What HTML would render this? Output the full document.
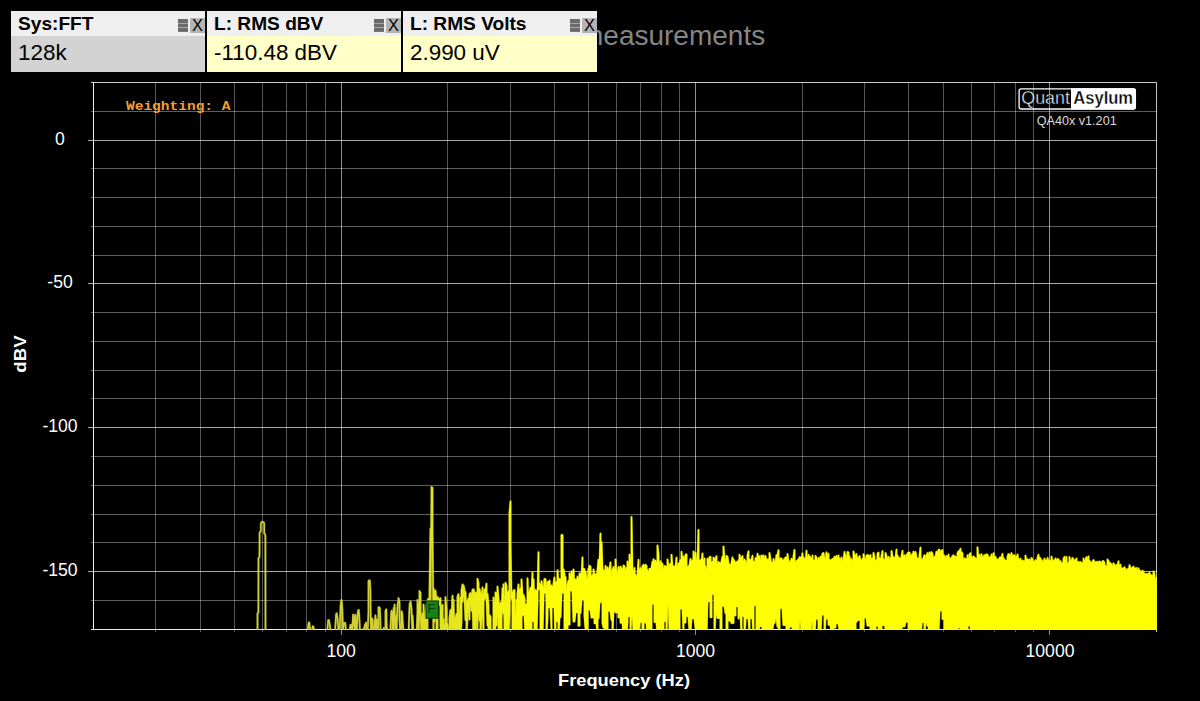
<!DOCTYPE html>
<html><head><meta charset="utf-8"><title>QA40x</title>
<style>
html,body{margin:0;padding:0;background:#000;}
body{width:1200px;height:701px;position:relative;overflow:hidden;font-family:"Liberation Sans",sans-serif;}
svg{position:absolute;left:0;top:0;}
.bgtxt{position:absolute;left:580px;top:19.5px;font-size:28px;line-height:32px;color:#858585;white-space:nowrap;}
.panel{position:absolute;top:11px;height:61px;overflow:hidden;}
.panel .hd{position:absolute;left:0;top:0;right:0;height:24.6px;background:#efefef;}
.panel .bd{position:absolute;left:0;top:24.6px;right:0;bottom:0;}
.panel .t{position:absolute;left:7.1px;top:2.5px;font-size:17.8px;line-height:20px;font-weight:bold;color:#000;white-space:nowrap;transform:scaleX(1.075);transform-origin:left center;}
.panel .v{position:absolute;left:6.5px;top:4.0px;font-size:22.6px;line-height:26px;color:#000;white-space:nowrap;transform:scaleX(0.992);transform-origin:left center;}
.panel .mn{position:absolute;right:17.1px;top:8.3px;width:10px;height:3.4px;background:#6a6a6a;box-shadow:0 4.45px 0 #6a6a6a,0 8.9px 0 #6a6a6a;}
.panel .x{position:absolute;right:0px;top:7px;width:15px;height:14.5px;background:#b4b4b4;color:#000;font-size:16.4px;line-height:15.5px;text-align:center;}
.lbl{position:absolute;color:#fff;font-size:17.6px;line-height:20px;white-space:nowrap;}
.yl{width:60px;text-align:center;left:30px;}
.xl{width:80px;text-align:center;top:641px;}
</style></head><body>
<div class="bgtxt">measurements</div>
<div class="panel" style="left:11px;width:194px;"><div class="hd"></div><div class="bd" style="background:#d3d3d3"></div>
 <div class="t">Sys:FFT</div><div class="mn"></div><div class="x">X</div><div class="bd"><div class="v">128k</div></div></div>
<div class="panel" style="left:207px;width:194px;"><div class="hd"></div><div class="bd" style="background:#ffffc8"></div>
 <div class="t">L: RMS dBV</div><div class="mn"></div><div class="x">X</div><div class="bd"><div class="v">-110.48 dBV</div></div></div>
<div class="panel" style="left:403px;width:194px;"><div class="hd"></div><div class="bd" style="background:#ffffc8"></div>
 <div class="t">L: RMS Volts</div><div class="mn"></div><div class="x">X</div><div class="bd"><div class="v">2.990 uV</div></div></div>

<svg width="1200" height="701" viewBox="0 0 1200 701">
<defs><clipPath id="pc"><rect x="93.0" y="82.5" width="1064.0" height="547.5"/></clipPath></defs>
<g shape-rendering="crispEdges" stroke-width="1">
<line x1="91.0" y1="82.5" x2="1157.0" y2="82.5" stroke="#fff" stroke-opacity="0.80"/>
<line x1="91.0" y1="111.5" x2="1157.0" y2="111.5" stroke="#fff" stroke-opacity="0.37"/>
<line x1="88.0" y1="140.5" x2="1157.0" y2="140.5" stroke="#fff" stroke-opacity="0.66"/>
<line x1="91.0" y1="168.5" x2="1157.0" y2="168.5" stroke="#fff" stroke-opacity="0.37"/>
<line x1="91.0" y1="197.5" x2="1157.0" y2="197.5" stroke="#fff" stroke-opacity="0.37"/>
<line x1="91.0" y1="226.5" x2="1157.0" y2="226.5" stroke="#fff" stroke-opacity="0.37"/>
<line x1="91.0" y1="255.5" x2="1157.0" y2="255.5" stroke="#fff" stroke-opacity="0.37"/>
<line x1="88.0" y1="283.5" x2="1157.0" y2="283.5" stroke="#fff" stroke-opacity="0.66"/>
<line x1="91.0" y1="312.5" x2="1157.0" y2="312.5" stroke="#fff" stroke-opacity="0.37"/>
<line x1="91.0" y1="341.5" x2="1157.0" y2="341.5" stroke="#fff" stroke-opacity="0.37"/>
<line x1="91.0" y1="370.5" x2="1157.0" y2="370.5" stroke="#fff" stroke-opacity="0.37"/>
<line x1="91.0" y1="398.5" x2="1157.0" y2="398.5" stroke="#fff" stroke-opacity="0.37"/>
<line x1="88.0" y1="427.5" x2="1157.0" y2="427.5" stroke="#fff" stroke-opacity="0.66"/>
<line x1="91.0" y1="456.5" x2="1157.0" y2="456.5" stroke="#fff" stroke-opacity="0.37"/>
<line x1="91.0" y1="485.5" x2="1157.0" y2="485.5" stroke="#fff" stroke-opacity="0.37"/>
<line x1="91.0" y1="514.5" x2="1157.0" y2="514.5" stroke="#fff" stroke-opacity="0.37"/>
<line x1="91.0" y1="542.5" x2="1157.0" y2="542.5" stroke="#fff" stroke-opacity="0.37"/>
<line x1="88.0" y1="571.5" x2="1157.0" y2="571.5" stroke="#fff" stroke-opacity="0.66"/>
<line x1="91.0" y1="600.5" x2="1157.0" y2="600.5" stroke="#fff" stroke-opacity="0.37"/>
<line x1="155.5" y1="82.5" x2="155.5" y2="632.0" stroke="#fff" stroke-opacity="0.34"/>
<line x1="200.5" y1="82.5" x2="200.5" y2="632.0" stroke="#fff" stroke-opacity="0.34"/>
<line x1="234.5" y1="82.5" x2="234.5" y2="632.0" stroke="#fff" stroke-opacity="0.34"/>
<line x1="262.5" y1="82.5" x2="262.5" y2="632.0" stroke="#fff" stroke-opacity="0.34"/>
<line x1="286.5" y1="82.5" x2="286.5" y2="632.0" stroke="#fff" stroke-opacity="0.34"/>
<line x1="306.5" y1="82.5" x2="306.5" y2="632.0" stroke="#fff" stroke-opacity="0.34"/>
<line x1="325.5" y1="82.5" x2="325.5" y2="632.0" stroke="#fff" stroke-opacity="0.34"/>
<line x1="341.5" y1="82.5" x2="341.5" y2="634.5" stroke="#fff" stroke-opacity="0.56"/>
<line x1="447.5" y1="82.5" x2="447.5" y2="632.0" stroke="#fff" stroke-opacity="0.34"/>
<line x1="510.5" y1="82.5" x2="510.5" y2="632.0" stroke="#fff" stroke-opacity="0.34"/>
<line x1="554.5" y1="82.5" x2="554.5" y2="632.0" stroke="#fff" stroke-opacity="0.34"/>
<line x1="588.5" y1="82.5" x2="588.5" y2="632.0" stroke="#fff" stroke-opacity="0.34"/>
<line x1="616.5" y1="82.5" x2="616.5" y2="632.0" stroke="#fff" stroke-opacity="0.34"/>
<line x1="640.5" y1="82.5" x2="640.5" y2="632.0" stroke="#fff" stroke-opacity="0.34"/>
<line x1="661.5" y1="82.5" x2="661.5" y2="632.0" stroke="#fff" stroke-opacity="0.34"/>
<line x1="679.5" y1="82.5" x2="679.5" y2="632.0" stroke="#fff" stroke-opacity="0.34"/>
<line x1="695.5" y1="82.5" x2="695.5" y2="634.5" stroke="#fff" stroke-opacity="0.56"/>
<line x1="802.5" y1="82.5" x2="802.5" y2="632.0" stroke="#fff" stroke-opacity="0.34"/>
<line x1="864.5" y1="82.5" x2="864.5" y2="632.0" stroke="#fff" stroke-opacity="0.34"/>
<line x1="908.5" y1="82.5" x2="908.5" y2="632.0" stroke="#fff" stroke-opacity="0.34"/>
<line x1="943.5" y1="82.5" x2="943.5" y2="632.0" stroke="#fff" stroke-opacity="0.34"/>
<line x1="971.5" y1="82.5" x2="971.5" y2="632.0" stroke="#fff" stroke-opacity="0.34"/>
<line x1="994.5" y1="82.5" x2="994.5" y2="632.0" stroke="#fff" stroke-opacity="0.34"/>
<line x1="1015.5" y1="82.5" x2="1015.5" y2="632.0" stroke="#fff" stroke-opacity="0.34"/>
<line x1="1033.5" y1="82.5" x2="1033.5" y2="632.0" stroke="#fff" stroke-opacity="0.34"/>
<line x1="1049.5" y1="82.5" x2="1049.5" y2="634.5" stroke="#fff" stroke-opacity="0.56"/>
<line x1="1156.5" y1="82.5" x2="1156.5" y2="632.0" stroke="#fff" stroke-opacity="0.76"/>
<line x1="93.5" y1="82.0" x2="93.5" y2="630.0" stroke="#fff" stroke-opacity="0.93"/>
<line x1="91.0" y1="629.5" x2="1157.0" y2="629.5" stroke="#fff" stroke-opacity="0.93"/>
</g>
<defs><path id="tr" d="M45.6,635.5 49.4,635.5 53.1,635.5 56.7,635.5 60.2,635.5 63.7,635.5 67.1,635.5 70.4,635.5 73.6,635.5 76.8,635.5 79.9,635.5 83,635.5 86,635.5 88.9,635.5 91.8,635.5 94.6,635.5 97.4,635.5 100.1,635.5 102.8,635.5 105.4,635.5 108,635.5 110.5,635.5 113,635.5 115.5,635.5 117.9,635.5 120.3,635.5 122.6,635.5 125,635.5 127.2,635.5 129.5,635.5 131.7,635.5 133.9,635.5 136,635.5 138.2,635.5 140.3,635.5 142.3,635.5 144.4,635.5 146.4,635.5 148.4,635.5 150.3,635.5 152.3,635.5 154.2,635.5 156.1,635.5 157.9,635.5 159.8,635.5 161.6,635.5 163.4,635.5 165.2,635.5 166.9,635.5 168.7,635.5 170.4,635.5 172.1,635.5 173.8,635.5 175.4,635.5 177.1,635.5 178.7,635.5 180.3,635.5 181.9,635.5 183.5,635.5 185.1,635.5 186.6,635.5 188.1,635.5 189.6,635.5 191.2,635.5 192.6,635.5 194.1,635.5 195.6,635.5 197,635.5 198.4,635.5 199.9,635.5 201.3,635.5 202.7,635.5 204,635.5 205.4,635.5 206.8,635.5 208.1,635.5 209.4,635.5 210.8,635.5 212.1,635.5 213.4,635.5 214.7,635.5 215.9,635.5 217.2,635.5 218.5,635.5 219.7,635.5 220.9,635.5 222.2,635.5 223.4,635.5 224.6,635.5 225.8,635.5 227,635.5 228.2,635.5 229.3,635.5 230.5,635.5 231.6,635.5 232.8,635.5 233.9,635.5 235.1,635.5 236.2,635.5 237.3,635.5 238.4,635.5 239.5,635.5 240.6,635.5 241.7,635.5 242.7,635.5 243.8,635.5 244.8,634.8 245.9,635.5 246.9,635.5 248,635.5 249,635.5 250,635.5 251,635.5 252.1,635.5 253.1,635.5 254.1,635.5 257.5,635.5 257.5,613.5 258.4,612.5 258.5,558 259.5,557 259.6,532.5 260.8,531.5 260.9,523.5 261.6,522 263.6,522 264.2,523.5 264.3,533.5 265.2,534.5 265.4,536 265.5,635.5 268.3,635.5 269.2,635.5 270.1,635.5 271,635.5 271.9,635.5 272.7,635.5 273.6,635.5 274.5,635.5 275.4,635.5 276.2,635.5 277.1,635.5 277.9,635.5 278.8,635.5 279.6,635.5 280.5,635.5 281.3,635.5 282.1,635.5 282.9,635.5 283.8,635.5 284.6,635.5 285.4,635.5 286.2,635.5 287,633.2 287.8,631 288.6,635.5 289.4,635.5 290.2,635.5 291,635.5 291.7,635.5 292.5,635.5 293.3,635.5 294.1,635.5 294.8,633.8 295.6,630.3 296.3,634.5 297.1,635.5 297.8,635.5 298.6,635.5 299.3,635.5 300.1,635.5 300.8,635.5 301.5,635.5 302.3,635.5 303,635.5 303.7,635.5 304.4,635.5 305.1,635.5 305.8,635.5 306.6,635.5 307.3,635.5 308,628 308.7,622.7 309.3,622.5 310,629.5 310.7,635.5 311.4,635.5 312.1,629.9 312.8,626.2 313.5,626.9 314.1,631.5 314.8,635.5 315.5,635.5 316.1,635.5 316.8,635.5 317.5,635.5 318.1,635.5 318.8,635.5 319.4,635.5 320.1,635.5 320.7,635.5 321.3,635.5 322,635.5 322.6,635.5 323.3,635.5 323.9,635.5 324.5,635.5 325.1,633.4 325.8,635.5 326.4,635.5 327,635.5 327.6,627.1 328.2,620.1 328.9,620.1 329.5,623.2 330.1,626.9 330.7,635.5 331.3,635.5 331.9,635.5 332.5,635.5 333.1,635.5 333.7,635.5 334.3,635.5 334.8,635.5 335.4,626.3 336,615 336.6,613.2 337.2,616.1 337.8,621 338.3,627.3 338.9,635.5 339.5,635.5 340,621 340.6,606.1 341.2,600.1 341.7,600.3 342.3,608.3 342.9,629 343.4,627.2 344,623.3 344.5,623.5 345.1,622.7 345.6,626.2 346.2,635.2 346.7,635.5 347.3,635.5 347.8,635.5 348.3,635.5 348.9,635.5 349.4,635.5 349.9,628.4 350.5,624.8 351,624.8 351.5,633.4 352.1,635.5 352.6,622.8 353.1,614.6 353.6,617.4 354.1,625.2 354.7,628.2 355.2,614.7 355.7,616.4 356.2,635.5 356.7,635.5 357.2,621.8 357.7,613.6 358.2,610.3 358.7,609.9 359.2,615.1 359.7,625.5 360.2,635.5 360.7,635.5 361.2,635.5 361.7,635.5 362.2,635.5 362.7,635.5 363.2,635.5 363.7,628.3 364.2,633.3 364.7,626 365.1,624.2 365.6,624.9 366.1,622.6 366.6,635.5 367.1,635.5 367.5,635.5 368.5,612.1 368.5,581.2 369.4,580.2 369.9,580.8 370.4,591.2 370.8,623.2 371.3,635.5 371.8,622.9 372.2,618.5 372.7,634.2 373.1,635.5 373.6,635.5 374.5,619.9 374.5,634.4 375.4,615.3 375.9,621.5 376.3,628.1 376.8,619.4 377.2,630.9 377.6,635.5 378.5,624.4 378.5,607.3 379.4,607.2 379.9,608.6 380.3,617.9 380.7,635.5 381.2,635.5 381.6,635.5 382.5,635.5 382.5,636.5 383.3,635.5 383.8,627.8 384.2,633.3 384.6,635.5 385.5,632.5 385.5,610.9 386.3,609.3 386.7,626.6 387.5,635.5 387.5,636.5 388.4,635.5 388.8,635.5 389.2,635.5 389.6,635.5 390.5,635.5 390.5,626.4 391.3,612.2 391.7,610.7 392.5,613.9 392.5,635.5 393.3,630.5 393.7,607.9 394.5,622.5 394.5,604.6 395.3,635.5 395.7,635.5 396.5,615.3 396.5,635.5 397.3,610 397.6,604.7 398.5,600.4 398.5,598.1 399.5,602.2 399.5,618.8 400.4,635.5 400.7,635.5 401.5,626.8 401.5,611.2 402.3,613.5 402.6,620.8 403.5,631.3 403.5,635.5 404.5,636.5 404.5,635.5 405.3,635.5 405.6,635.5 406.5,635.5 406.5,636.5 407.5,636.5 407.5,635.5 408.5,635.5 408.5,636.5 409.3,612.4 409.7,603.5 410.5,603.6 410.5,601.5 411.5,608.7 411.5,610.1 412.5,635.5 412.5,615.6 413.5,633.5 413.5,635.5 414.5,636.5 414.5,635.5 415.3,635.5 415.7,635.5 416.5,635.5 416.5,636.5 417.5,612.4 417.5,600 418.5,610 418.5,635.5 419.5,606.1 419.5,591 420.5,593 420.5,611.2 421.5,636.5 421.5,635.5 422.5,613.4 422.5,635.5 423.5,624.5 423.5,604.6 424.5,635.1 424.5,636.1 425.5,635.5 425.5,611.8 426.5,604.4 426.5,635.5 427.5,635.5 427.5,600.1 428.5,598.8 428.5,603.1 429.5,597.7 429.5,593.5 430.5,528.2 430.5,604.2 431.5,498.1 431.5,487 432.5,487.8 432.5,528 433.5,635.5 433.5,588.3 434.5,592.5 434.5,621.5 435.5,592.3 435.5,590.6 436.5,601.7 436.5,632.9 437.5,635.5 437.5,596.9 438.5,599.3 438.5,605.7 439.5,604 439.5,598.9 440.5,598.2 440.5,625.3 441.5,635.5 441.5,608.8 442.5,604.8 442.5,635.4 443.5,635.5 443.5,619 444.5,635.5 444.5,636.5 445.5,624.5 445.5,597.1 446.5,610.3 446.5,635.5 447.5,635.5 447.5,624.3 448.5,635.5 448.5,636.5 449.5,635.5 449.5,617.8 450.5,610.1 450.5,635.5 451.5,632.7 451.5,616.8 452.5,595.7 452.5,618.6 453.5,635.5 453.5,599.8 454.5,635.5 454.5,636.5 455.5,635.5 455.5,618.7 456.5,614 456.5,635.5 457.5,635.5 457.5,596.8 458.5,594.1 458.5,625.3 459.5,636.5 459.5,635.5 460.5,597.4 460.5,635.5 461.5,621.8 461.5,590.3 462.5,584.4 462.5,601.8 463.5,591 463.5,585.3 464.5,589.8 464.5,595.5 465.5,620.2 465.5,591.9 466.5,618.3 466.5,635.5 467.5,618.9 467.5,601.7 468.5,598.2 468.5,602 469.5,619.5 469.5,594.2 470.5,593.1 470.5,597.1 471.5,610.7 471.5,603.2 472.5,589.7 472.5,602.9 473.5,635.5 473.5,589.2 474.5,592.2 474.5,635.5 475.5,628.9 475.5,593.6 476.5,592.8 476.5,602.3 477.5,635.5 477.5,578.8 478.5,583.2 478.5,606.9 479.5,620.8 479.5,589 480.5,594 480.5,635.5 481.5,615.6 481.5,600.1 482.5,587.5 482.5,600.1 483.5,635.5 483.5,598.9 484.5,589.5 484.5,599.2 485.5,596.8 485.5,590.8 486.5,583.7 486.5,596.2 487.5,625.5 487.5,594 488.5,605.6 488.5,635.5 489.5,635.5 489.5,615 490.5,616.8 490.5,635.5 491.5,635.5 491.5,630.6 492.5,635.5 492.5,636.5 493.5,635.5 493.5,597.5 494.5,606.7 494.5,635.5 495.5,625.2 495.5,592.5 496.5,593.1 496.5,625.5 497.5,601.5 497.5,586.6 498.5,598.7 498.5,635.5 499.5,623.8 499.5,606.7 500.5,602.6 500.5,635.5 501.5,635.5 501.5,619.2 502.5,588.3 502.5,604.1 503.5,613.4 503.5,584.3 504.5,622.5 504.5,635.5 505.5,635.5 505.5,582.7 506.5,586 506.5,635.5 507.5,626.4 507.5,593.1 508.5,591.3 508.5,635.5 509.5,610.9 509.5,512.5 510.5,501.4 510.5,542.5 511.5,599 511.5,591.8 512.5,592.7 512.5,635.5 513.5,635.5 513.5,590.7 514.5,590 514.5,635.5 515.5,636.5 515.5,635.5 516.5,599.8 516.5,635.5 517.5,628.9 517.5,594.2 518.5,584.4 518.5,635.5 519.5,635.5 519.5,591.5 520.5,588.5 520.5,635.5 521.5,635.5 521.5,579.4 522.5,595.4 522.5,615.1 523.5,615.1 523.5,595 524.5,599.1 524.5,615.1 525.5,635.5 525.5,607.9 526.5,604 526.5,630.7 527.5,630.7 527.5,578.3 528.5,608.9 528.5,635.5 529.5,635.5 529.5,592.6 530.5,587.8 530.5,635.5 531.5,634.3 531.5,594.1 532.5,572.8 532.5,621 533.5,621 533.5,579.2 534.5,607.6 534.5,635.5 535.5,635.5 535.5,590 536.5,591.5 536.5,635 537.5,601.2 537.5,596.4 538.5,552.2 538.5,589.2 539.5,589.2 539.5,583.5 540.5,586.3 540.5,635.5 541.5,635.5 541.5,581.2 542.5,589.2 542.5,635.5 543.5,595.3 543.5,594.3 544.5,578.9 544.5,592.7 545.5,592.7 545.5,579.2 546.5,601.4 546.5,635.5 547.5,617.7 547.5,582.3 548.5,581.6 548.5,607.4 549.5,607.4 549.5,580.6 550.5,592.7 550.5,607.4 551.5,629.3 551.5,585.4 552.5,588.1 552.5,607.3 553.5,607.3 553.5,583.8 554.5,577.4 554.5,607.3 555.5,635.5 555.5,583.2 556.5,581.9 556.5,621.1 557.5,621.1 557.5,570.2 558.5,585 558.5,635.5 559.5,617.1 559.5,578.9 560.5,579.6 560.5,617.1 561.5,592.6 561.5,534.9 562.5,535.2 562.5,592.6 563.5,592.6 563.5,569.3 564.5,574.3 564.5,635.5 565.5,635.5 565.5,577.1 566.5,608.3 566.5,630 567.5,630 567.5,585.1 568.5,580.8 568.5,624.5 569.5,624.5 569.5,573.3 570.5,576.6 570.5,590.5 571.5,590.5 571.5,571.3 572.5,574.2 572.5,590.5 573.5,621.5 573.5,569.4 574.5,589 574.5,621.5 575.5,612.2 575.5,579.6 576.5,579.6 576.5,612.2 577.5,612.2 577.5,576.4 578.5,580.1 578.5,625.7 579.5,625.7 579.5,573.3 580.5,573.8 580.5,612.9 581.5,599.2 581.5,578 582.5,557.4 582.5,599.2 583.5,599.2 583.5,568.6 584.5,569.4 584.5,616.7 585.5,628.2 585.5,571.7 586.5,580.2 586.5,628.2 587.5,628.2 587.5,588.7 588.5,568.3 588.5,609.4 589.5,609.4 589.5,565.7 590.5,566.8 590.5,609.4 591.5,617.5 591.5,577.9 592.5,575.1 592.5,617.5 593.5,617.5 593.5,569.5 594.5,577.4 594.5,623.3 595.5,623.3 595.5,574.8 596.5,573.8 596.5,623.3 597.5,633.4 597.5,570.1 598.5,559.7 598.5,618.4 599.5,602 599.5,566.5 600.5,533.6 600.5,602 601.5,602 601.5,542 602.5,571.1 602.5,622.8 603.5,627.3 603.5,569.9 604.5,573.4 604.5,627.3 605.5,635.5 605.5,566 606.5,575.2 606.5,635.5 607.5,635.5 607.5,567.2 608.5,572 608.5,610.8 609.5,610.8 609.5,570 610.5,562.5 610.5,610.8 611.5,619.9 611.5,583.8 612.5,569.2 612.5,635.5 613.5,609.5 613.5,566.9 614.5,573.8 614.5,609.5 615.5,612.3 615.5,559.5 616.5,579.8 616.5,612.3 617.5,612.3 617.5,577.5 618.5,567.1 618.5,617.4 619.5,617.4 619.5,574 620.5,566.6 620.5,622.7 621.5,622.7 621.5,568 622.5,570.8 622.5,622.7 623.5,635.5 623.5,565.5 624.5,566.2 624.5,635.5 625.5,635.5 625.5,575.1 626.5,567.9 626.5,635.5 627.5,622.4 627.5,561.5 628.5,567.2 628.5,616.2 629.5,616.2 629.5,554.6 630.5,568.1 630.5,631.8 631.5,611 631.5,517 632.5,574.8 632.5,611 633.5,629.5 633.5,572.2 634.5,568.1 634.5,629.5 635.5,635.5 635.5,574.4 636.5,579.7 636.5,635.5 637.5,635.5 637.5,576.4 638.5,559.8 638.5,635.5 639.5,622.1 639.5,572.2 640.5,568.3 640.5,622.1 641.5,622.1 641.5,574.8 642.5,566 642.5,632.7 643.5,632.7 643.5,564.7 644.5,568.2 644.5,622.5 645.5,622.5 645.5,564.7 646.5,565.9 646.5,622.5 647.5,635.5 647.5,569.9 648.5,577.3 648.5,635.5 649.5,635.5 649.5,568.8 650.5,569 650.5,635.5 651.5,635.5 651.5,568.3 652.5,561.7 652.5,603.8 653.5,603.8 653.5,559.2 654.5,564.3 654.5,621.9 655.5,621.9 655.5,560.6 656.5,564.7 656.5,621.9 657.5,635.5 657.5,545.5 658.5,555 658.5,635.5 659.5,635.5 659.5,566.6 660.5,561.3 660.5,635.5 661.5,635.5 661.5,563.1 662.5,564.1 662.5,635.5 663.5,635.5 663.5,573.8 664.5,566.1 664.5,621.1 665.5,621.1 665.5,566.3 666.5,567.1 666.5,635.5 667.5,594.9 667.5,559.4 668.5,566.2 668.5,594.9 669.5,628.5 669.5,567 670.5,563.8 670.5,628.5 671.5,628.5 671.5,554.8 672.5,567.6 672.5,635.5 673.5,635.5 673.5,566.6 674.5,566.4 674.5,635.5 675.5,629.5 675.5,568.3 676.5,557.6 676.5,629.5 677.5,629.5 677.5,570.2 678.5,563.4 678.5,634.1 679.5,634.1 679.5,564.6 680.5,560.2 680.5,608.6 681.5,608.6 681.5,551.8 682.5,564.3 682.5,608.6 683.5,631.1 683.5,556.5 684.5,561.5 684.5,622.6 685.5,622.6 685.5,554.8 686.5,554.4 686.5,616.1 687.5,616.1 687.5,566.9 688.5,566.4 688.5,616.1 689.5,631.1 689.5,565.4 690.5,559 690.5,631.1 691.5,618.7 691.5,562.4 692.5,560.2 692.5,618.3 693.5,618.3 693.5,551.4 694.5,562.8 694.5,618.3 695.5,628.2 695.5,552.8 696.5,567 696.5,635.5 697.5,635.5 697.5,563.7 698.5,530 698.5,635.5 699.5,635.3 699.5,560.9 700.5,560 700.5,635.3 701.5,634.6 701.5,562.6 702.5,553.5 702.5,634.6 703.5,629.2 703.5,562.9 704.5,558.4 704.5,629.2 705.5,635.5 705.5,566.2 706.5,574.1 706.5,635.5 707.5,601.3 707.5,558.7 708.5,560.2 708.5,601.3 709.5,601.3 709.5,557.1 710.5,557 710.5,617.3 711.5,617.3 711.5,562.9 712.5,561.8 712.5,594.1 713.5,594.1 713.5,557.6 714.5,561.2 714.5,635.5 715.5,611.4 715.5,558.6 716.5,556.3 716.5,611.4 717.5,617.9 717.5,565.9 718.5,561.9 718.5,617.9 719.5,617.9 719.5,562.8 720.5,563.3 720.5,635.5 721.5,635.5 721.5,561.6 722.5,556.7 722.5,605.7 723.5,605.7 723.5,546.6 724.5,561.1 724.5,605.7 725.5,613.2 725.5,565.4 726.5,555.8 726.5,635.5 727.5,635.5 727.5,556.8 728.5,564 728.5,620.6 729.5,620.6 729.5,564.6 730.5,565.1 730.5,620.6 731.5,623 731.5,563.1 732.5,557.5 732.5,623 733.5,623 733.5,559.5 734.5,561.6 734.5,615.4 735.5,615.4 735.5,563.4 736.5,562 736.5,606.3 737.5,606.3 737.5,564.3 738.5,560.3 738.5,618.5 739.5,613.8 739.5,554.7 740.5,561.5 740.5,613.8 741.5,635.5 741.5,557.6 742.5,556.1 742.5,616 743.5,616 743.5,564.2 744.5,559.5 744.5,635.5 745.5,620.4 745.5,561 746.5,567.6 746.5,618.2 747.5,618.2 747.5,555.6 748.5,551.3 748.5,618.2 749.5,635.1 749.5,559.6 750.5,560.1 750.5,618.2 751.5,618.2 751.5,560.1 752.5,555.7 752.5,618.2 753.5,635.5 753.5,561.4 754.5,562.5 754.5,605.1 755.5,605.1 755.5,558.6 756.5,557.5 756.5,630.7 757.5,630.7 757.5,553.7 758.5,559.8 758.5,630.7 759.5,626.1 759.5,556.2 760.5,565.9 760.5,626.1 761.5,626.1 761.5,555.4 762.5,557.8 762.5,635.5 763.5,635.5 763.5,555.4 764.5,563.5 764.5,635.5 765.5,635.5 765.5,556.1 766.5,560.8 766.5,635.5 767.5,635.5 767.5,559.9 768.5,559.2 768.5,632.9 769.5,632.9 769.5,553 770.5,559.6 770.5,628.5 771.5,628.5 771.5,561.8 772.5,564.5 772.5,628.5 773.5,623 773.5,558.9 774.5,563.3 774.5,623 775.5,616.5 775.5,563.8 776.5,555.2 776.5,616.5 777.5,626.7 777.5,555 778.5,550.2 778.5,626.7 779.5,635.5 779.5,559.3 780.5,558.3 780.5,608.1 781.5,608.1 781.5,558.6 782.5,561.4 782.5,608.1 783.5,625 783.5,561.5 784.5,558.7 784.5,625 785.5,625 785.5,557.4 786.5,557.6 786.5,629.1 787.5,629.1 787.5,554.1 788.5,562.3 788.5,629.1 789.5,626.6 789.5,565 790.5,561 790.5,626.6 791.5,626.6 791.5,558.7 792.5,560 792.5,635.5 793.5,635.5 793.5,556.8 794.5,549.9 794.5,635.5 795.5,635.5 795.5,563.9 796.5,560.9 796.5,635.5 797.5,635.5 797.5,560.4 798.5,559.3 798.5,635.5 799.5,613.7 799.5,557.2 800.5,557.6 800.5,613.7 801.5,635.5 801.5,558.8 802.5,553.4 802.5,635.5 803.5,635.5 803.5,557.3 804.5,560.5 804.5,635.5 805.5,635.5 805.5,563.7 806.5,550.7 806.5,635.5 807.5,635.5 807.5,562.3 808.5,554.8 808.5,629.6 809.5,629.6 809.5,556.2 810.5,558 810.5,635.5 811.5,614.7 811.5,563.1 812.5,555.6 812.5,614.7 813.5,635.5 813.5,560.5 814.5,560.6 814.5,635.5 815.5,618.7 815.5,555.9 816.5,558.4 816.5,618.7 817.5,618.7 817.5,562.8 818.5,558 818.5,633.7 819.5,633.4 819.5,562.3 820.5,556.7 820.5,633.4 821.5,614.5 821.5,559.6 822.5,553.5 822.5,614.5 823.5,614.5 823.5,553.1 824.5,560.4 824.5,634.3 825.5,618.5 825.5,562.8 826.5,552.3 826.5,618.5 827.5,618.5 827.5,556.9 828.5,553.7 828.5,624.7 829.5,624.7 829.5,559.8 830.5,562.2 830.5,624.7 831.5,635 831.5,560.1 832.5,558.9 832.5,628.2 833.5,628.2 833.5,561.2 834.5,556.7 834.5,627.6 835.5,627.6 835.5,559.1 836.5,556 836.5,623.3 837.5,623.3 837.5,561.3 838.5,555.4 838.5,623.3 839.5,630.1 839.5,558.5 840.5,559.9 840.5,630.1 841.5,630.1 841.5,557.4 842.5,566.6 842.5,635.5 843.5,630.3 843.5,561 844.5,551.9 844.5,630.3 845.5,630.3 845.5,554.7 846.5,563.8 846.5,635.5 847.5,635.5 847.5,552 848.5,552.5 848.5,634.5 849.5,634.5 849.5,556.4 850.5,565.4 850.5,634.5 851.5,635.5 851.5,559.1 852.5,564.7 852.5,635.5 853.5,635.5 853.5,551.4 854.5,556.5 854.5,635.5 855.5,635.5 855.5,557 856.5,554 856.5,621.8 857.5,619.9 857.5,557.5 858.5,557.9 858.5,619.9 859.5,619.9 859.5,556 860.5,560.6 860.5,635.5 861.5,635.5 861.5,562 862.5,559 862.5,635.5 863.5,624.6 863.5,554.2 864.5,562.1 864.5,617.4 865.5,617.4 865.5,562.2 866.5,555.7 866.5,617.4 867.5,625.6 867.5,554.9 868.5,555.7 868.5,625.6 869.5,625.7 869.5,557.9 870.5,555.1 870.5,635.5 871.5,635.5 871.5,559.7 872.5,558.2 872.5,635.5 873.5,635.5 873.5,552.9 874.5,557.7 874.5,635.5 875.5,635.5 875.5,562.3 876.5,560.1 876.5,625.7 877.5,625.7 877.5,553.8 878.5,552.6 878.5,625.7 879.5,635.5 879.5,558.3 880.5,558.6 880.5,633.4 881.5,633.4 881.5,556 882.5,551.1 882.5,624.9 883.5,624.9 883.5,559.2 884.5,560.6 884.5,624.9 885.5,628.4 885.5,552.9 886.5,556.1 886.5,628.4 887.5,628.4 887.5,560.8 888.5,556.8 888.5,635.5 889.5,635.5 889.5,561.4 890.5,557.8 890.5,635.2 891.5,635.2 891.5,550.9 892.5,557.1 892.5,635.2 893.5,635.5 893.5,557.2 894.5,558.6 894.5,635.5 895.5,633.9 895.5,558.7 896.5,549.6 896.5,633.9 897.5,635.5 897.5,555.4 898.5,558.2 898.5,635.5 899.5,635.5 899.5,558.1 900.5,558.6 900.5,633.8 901.5,633.8 901.5,556.7 902.5,550.8 902.5,626.4 903.5,626.4 903.5,557.3 904.5,555.3 904.5,626.4 905.5,621.7 905.5,561.8 906.5,554.9 906.5,621.7 907.5,621.7 907.5,553.5 908.5,552.7 908.5,635.5 909.5,632.9 909.5,552.4 910.5,558.4 910.5,632.9 911.5,632.9 911.5,556.4 912.5,553.9 912.5,635.5 913.5,635.5 913.5,551.6 914.5,554.6 914.5,635.5 915.5,635.5 915.5,552 916.5,557.9 916.5,635.5 917.5,635.5 917.5,558.3 918.5,558.9 918.5,635.5 919.5,635 919.5,555.8 920.5,547.6 920.5,635 921.5,626 921.5,558.8 922.5,561.4 922.5,622.3 923.5,622.3 923.5,557.6 924.5,555.2 924.5,635.5 925.5,620.7 925.5,562.1 926.5,555 926.5,620.7 927.5,625.7 927.5,552.9 928.5,558.4 928.5,625.7 929.5,635.5 929.5,552.5 930.5,554.5 930.5,630.6 931.5,630.6 931.5,552.1 932.5,553.8 932.5,630.6 933.5,635.5 933.5,558 934.5,556.8 934.5,629.7 935.5,629.7 935.5,557.4 936.5,551.7 936.5,633.3 937.5,633.3 937.5,555.6 938.5,549.8 938.5,633.3 939.5,610.6 939.5,549.7 940.5,553.8 940.5,610.6 941.5,610.6 941.5,551.3 942.5,550.1 942.5,618.9 943.5,618.9 943.5,554.8 944.5,556.5 944.5,632.1 945.5,635.5 945.5,560.7 946.5,556.1 946.5,635.5 947.5,635.5 947.5,559.8 948.5,554.6 948.5,633.5 949.5,633.5 949.5,557.8 950.5,559.6 950.5,633.5 951.5,635.5 951.5,558.6 952.5,556.1 952.5,635.5 953.5,635.5 953.5,555.2 954.5,557.7 954.5,635.5 955.5,635.5 955.5,556.5 956.5,557.5 956.5,635.5 957.5,627.3 957.5,553.3 958.5,551.3 958.5,627.3 959.5,627.3 959.5,551.6 960.5,548.8 960.5,635.5 961.5,635.5 961.5,552.2 962.5,553.4 962.5,635.4 963.5,635.4 963.5,561.7 964.5,558.3 964.5,635.4 965.5,635.5 965.5,558.8 966.5,559.3 966.5,635.5 967.5,635.5 967.5,555.3 968.5,561.1 968.5,625.4 969.5,625.4 969.5,554.3 970.5,553.3 970.5,625.4 971.5,635.5 971.5,556.8 972.5,558.4 972.5,635.5 973.5,635.5 973.5,556.3 974.5,558.4 974.5,635.5 975.5,635.5 975.5,558.1 976.5,560 976.5,635.5 977.5,635.5 977.5,547.3 978.5,560.5 978.5,635.5 979.5,635.5 979.5,554.8 980.5,558.5 980.5,635.5 981.5,635.5 981.5,554.2 982.5,561.2 982.5,635.5 983.5,635.5 983.5,557.3 984.5,555.1 984.5,635.5 985.5,635.5 985.5,556.2 986.5,554.3 986.5,635.5 987.5,635.5 987.5,554.8 988.5,558.3 988.5,635.5 989.5,635.5 989.5,558.2 990.5,556.9 990.5,635.5 991.5,635.5 991.5,554.4 992.5,561.7 992.5,635.5 993.5,635.5 993.5,553.2 994.5,561.5 994.5,635.5 995.5,635.5 995.5,556.8 996.5,562.5 996.5,635.5 997.5,635.5 997.5,559.4 998.5,559.8 998.5,635.5 999.5,635.5 999.5,557.9 1000.5,557.4 1000.5,635.5 1001.5,635.5 1001.5,558.2 1002.5,553.9 1002.5,635.5 1003.5,635.5 1003.5,558 1004.5,560.6 1004.5,635.5 1005.5,635.5 1005.5,560.6 1006.5,560.7 1006.5,635.5 1007.5,635.5 1007.5,556.7 1008.5,554.1 1008.5,635.5 1009.5,635.5 1009.5,554.4 1010.5,558 1010.5,635.5 1011.5,631.1 1011.5,553.1 1012.5,559.8 1012.5,631.1 1013.5,631.1 1013.5,555.4 1014.5,555.3 1014.5,635.5 1015.5,635.5 1015.5,558.4 1016.5,556.5 1016.5,635.5 1017.5,635.5 1017.5,554.5 1018.5,561.3 1018.5,635.5 1019.5,635.5 1019.5,560.2 1020.5,558.6 1020.5,635.5 1021.5,635.5 1021.5,561.7 1022.5,560.5 1022.5,635.5 1023.5,635.5 1023.5,561.3 1024.5,561.2 1024.5,635.5 1025.5,635.5 1025.5,555.6 1026.5,562.3 1026.5,635.5 1027.5,635.5 1027.5,559.2 1028.5,561.8 1028.5,635.5 1029.5,635.5 1029.5,559.5 1030.5,564.4 1030.5,635.5 1031.5,635.5 1031.5,557.9 1032.5,559.4 1032.5,635.5 1033.5,635.5 1033.5,562.2 1034.5,561.4 1034.5,635.5 1035.5,635.5 1035.5,560.2 1036.5,562.2 1036.5,635.5 1037.5,635.5 1037.5,558 1038.5,554.8 1038.5,635.5 1039.5,635.5 1039.5,557.6 1040.5,558.5 1040.5,635.5 1041.5,635.5 1041.5,559.9 1042.5,562.8 1042.5,635.5 1043.5,635.5 1043.5,562.2 1044.5,558.6 1044.5,635.5 1045.5,635.5 1045.5,560.5 1046.5,560.6 1046.5,635.5 1047.5,635.5 1047.5,557.9 1048.5,561.9 1048.5,635.5 1049.5,635.5 1049.5,560.4 1050.5,561.7 1050.5,635.5 1051.5,635.5 1051.5,556.6 1052.5,562.8 1052.5,635.5 1053.5,635.5 1053.5,560.9 1054.5,560.2 1054.5,635.5 1055.5,635.5 1055.5,558.4 1056.5,562 1056.5,635.5 1057.5,635.5 1057.5,559.1 1058.5,559.3 1058.5,635.5 1059.5,635.5 1059.5,561.9 1060.5,561.1 1060.5,635.5 1061.5,635.5 1061.5,563.2 1062.5,563.3 1062.5,635.5 1063.5,635.5 1063.5,559.1 1064.5,556.9 1064.5,635.5 1065.5,635.5 1065.5,564.1 1066.5,556.9 1066.5,635.5 1067.5,635.5 1067.5,566 1068.5,562.6 1068.5,635.5 1069.5,635.5 1069.5,557 1070.5,563.5 1070.5,635.5 1071.5,635.5 1071.5,561.6 1072.5,557.9 1072.5,635.5 1073.5,635.5 1073.5,559.1 1074.5,562.5 1074.5,635.5 1075.5,635.5 1075.5,561 1076.5,558.4 1076.5,635.5 1077.5,635.5 1077.5,563.2 1078.5,561.8 1078.5,635.5 1079.5,635.5 1079.5,563.6 1080.5,562 1080.5,635.5 1081.5,635.5 1081.5,562.8 1082.5,563.5 1082.5,635.5 1083.5,635.5 1083.5,558.5 1084.5,563.4 1084.5,635.5 1085.5,635.5 1085.5,560.5 1086.5,557.1 1086.5,635.5 1087.5,635.5 1087.5,562.3 1088.5,556.4 1088.5,635.5 1089.5,635.5 1089.5,560.8 1090.5,563.3 1090.5,635.5 1091.5,635.5 1091.5,563.9 1092.5,561.4 1092.5,635.5 1093.5,635.5 1093.5,560 1094.5,562.3 1094.5,635.5 1095.5,635.5 1095.5,562.2 1096.5,562.2 1096.5,635.5 1097.5,635.5 1097.5,561.8 1098.5,562.3 1098.5,635.5 1099.5,635.5 1099.5,561.4 1100.5,562.5 1100.5,635.5 1101.5,635.5 1101.5,565.9 1102.5,561.2 1102.5,635.5 1103.5,635.5 1103.5,561.1 1104.5,563.5 1104.5,635.5 1105.5,635.5 1105.5,565.7 1106.5,567.1 1106.5,635.5 1107.5,635.5 1107.5,559.5 1108.5,561.2 1108.5,635.5 1109.5,635.5 1109.5,562.6 1110.5,563.4 1110.5,635.5 1111.5,635.5 1111.5,564.1 1112.5,568.1 1112.5,635.5 1113.5,635.5 1113.5,563.3 1114.5,565.6 1114.5,635.5 1115.5,635.5 1115.5,567.4 1116.5,564.9 1116.5,635.5 1117.5,635.5 1117.5,567.3 1118.5,561.3 1118.5,635.5 1119.5,635.5 1119.5,565.5 1120.5,564.7 1120.5,635.5 1121.5,635.5 1121.5,568.1 1122.5,569.2 1122.5,635.5 1123.5,635.5 1123.5,568.2 1124.5,567.2 1124.5,635.5 1125.5,635.5 1125.5,568.7 1126.5,570.5 1126.5,635.5 1127.5,635.5 1127.5,570 1128.5,568.4 1128.5,635.5 1129.5,635.5 1129.5,565.2 1130.5,568.2 1130.5,635.5 1131.5,635.5 1131.5,569.6 1132.5,567.7 1132.5,635.5 1133.5,635.5 1133.5,566.6 1134.5,570.4 1134.5,635.5 1135.5,635.5 1135.5,568.5 1136.5,568 1136.5,635.5 1137.5,635.5 1137.5,573.9 1138.5,568.3 1138.5,635.5 1139.5,635.5 1139.5,570.1 1140.5,573.8 1140.5,635.5 1141.5,635.5 1141.5,572 1142.5,570.7 1142.5,635.5 1143.5,635.5 1143.5,571.6 1144.5,576.4 1144.5,635.5 1145.5,635.5 1145.5,574.3 1146.5,573.9 1146.5,635.5 1147.5,635.5 1147.5,574.9 1148.5,573.9 1148.5,635.5 1149.5,635.5 1149.5,572.6 1150.5,575.8 1150.5,635.5 1151.5,635.5 1151.5,575.3 1152.5,575.8 1152.5,635.5 1153.5,635.5 1153.5,571.4 1154.5,574.4 1154.5,635.5 1155.5,635.5 1155.5,579.9 1156.5,577.6 1156.5,635.5 1157.5,635.5 1157.5,578 1158.5,579.2 1158.5,635.5 1159.5,635.5 1159.5,576.6 1160.5,577.8 1160.5,635.5 1161.5,635.5 1161.5,579.8"/><linearGradient id="tg" gradientUnits="userSpaceOnUse" x1="380" y1="0" x2="540" y2="0"><stop offset="0" stop-color="#d0d036"/><stop offset="1" stop-color="#ffff00"/></linearGradient></defs><g clip-path="url(#pc)" fill="none" stroke-linejoin="round" stroke="url(#tg)"><use href="#tr" stroke-width="2.3" stroke-opacity="0.45"/><use href="#tr" stroke-width="1.5"/></g>
<g>
<rect x="426" y="601" width="12.4" height="17.2" fill="#178217" stroke="#0a3c0a" stroke-width="1.1"/>
<text x="427.6" y="612.9" font-family="Liberation Sans, sans-serif" font-size="13.4" fill="#0a3c0a">F</text>
</g>
<!-- logo -->
<g>
<rect x="1019.1" y="88.8" width="116.3" height="20.2" rx="2.2" fill="none" stroke="#fff" stroke-width="1.3"/>
<path d="M1071,88.2 H1133.6 Q1135.9,88.2 1135.9,90.5 V107.3 Q1135.9,109.6 1133.6,109.6 H1071 Z" fill="#fff"/>
<text x="1021.3" y="104.4" font-family="Liberation Sans, sans-serif" font-size="18.6" fill="#fff" stroke="#000" stroke-width="0.45" textLength="48.6" lengthAdjust="spacingAndGlyphs">Quant</text>
<text x="1073.3" y="104.4" font-family="Liberation Sans, sans-serif" font-size="18.4" font-weight="bold" fill="#000" stroke="#fff" stroke-width="0.35" textLength="59.8" lengthAdjust="spacingAndGlyphs">Asylum</text>
<text x="1076.7" y="124.8" font-family="Liberation Sans, sans-serif" font-size="13.2" fill="#dcdcdc" text-anchor="middle" textLength="80" lengthAdjust="spacingAndGlyphs">QA40x v1.201</text>
</g>
<text x="126" y="110" font-family="Liberation Mono, monospace" font-weight="bold" font-size="12.4" fill="#f0a030" textLength="104.5" lengthAdjust="spacingAndGlyphs">Weighting: A</text>
</svg>

<div class="lbl yl" style="top:128.5px">0</div>
<div class="lbl yl" style="top:272.4px">-50</div>
<div class="lbl yl" style="top:416.3px">-100</div>
<div class="lbl yl" style="top:560.2px">-150</div>
<div class="lbl xl" style="left:301.2px">100</div>
<div class="lbl xl" style="left:655.6px">1000</div>
<div class="lbl xl" style="left:1010.0px">10000</div>
<div class="lbl" style="left:558px;top:670.6px;font-weight:bold;font-size:17px;transform:scaleX(1.075);transform-origin:left center;">Frequency (Hz)</div>
<div class="lbl" style="left:20px;top:354px;font-weight:bold;font-size:17.3px;transform:translate(-50%,-50%) rotate(-90deg) scaleX(1.08);transform-origin:center;">dBV</div>
</body></html>
